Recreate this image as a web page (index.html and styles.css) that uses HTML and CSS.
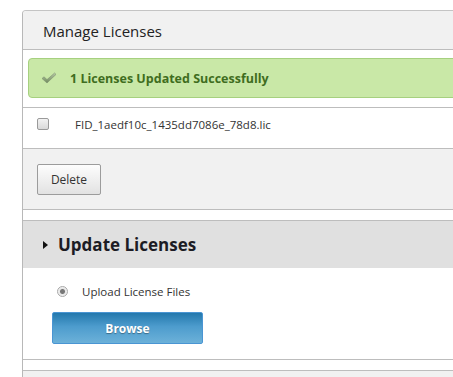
FILE: index.html
```html
<!DOCTYPE html>
<html lang="en">
<head>
    <meta charset="UTF-8">
    <meta name="viewport" content="width=device-width, initial-scale=1.0">
    <title>Manage Licenses</title>
    <link rel="stylesheet" href="styles.css">
</head>
<body>

<div class="panel">
    <div class="panel-title">Manage Licenses</div>

    <div class="message-area">
        <div class="alert-success">
            <svg class="check-icon" width="16" height="12" viewBox="0 0 16 12">
                <defs>
                    <linearGradient id="chk" x1="0" y1="0" x2="0" y2="1">
                        <stop offset="0" stop-color="#b9c9a8"/>
                        <stop offset="1" stop-color="#6f8a5c"/>
                    </linearGradient>
                </defs>
                <path d="M1 6.5 L3 4.8 L6 7.6 L13.6 1 L15 2.4 L6 11 Z" fill="url(#chk)" stroke="#7d9270" stroke-width="0.6"/>
            </svg>
            <span>1 Licenses Updated Successfully</span>
        </div>
    </div>

    <div class="license-row">
        <span class="fake-checkbox"></span>
        <span class="license-name">FID_1aedf10c_1435dd7086e_78d8.lic</span>
    </div>

    <div class="panel-footer">
        <button class="btn-default">Delete</button>
    </div>

    <div class="spacer"></div>

    <div class="section-head">
        <span class="caret"></span>
        <h2>Update Licenses</h2>
    </div>

    <div class="section-body">
        <div class="radio-row">
            <span class="fake-radio"></span>
            <span>Upload License Files</span>
        </div>
        <button class="btn-primary">Browse</button>
    </div>

    <div class="spacer"></div>
    <div class="next-section"></div>
</div>

</body>
</html>
```

FILE: styles.css
```css
body {
    margin: 0;
    padding: 10px 0 0 22px;
    overflow: hidden;
    font-family: "Open Sans", Arial, sans-serif;
    color: #333;
    background-color: white;
}
.panel {
    width: 520px;
    border-left: 1px solid #b8b8b8;
    border-top: 1px solid #c4c4c4;
    border-top-left-radius: 4px;
}
.panel-title {
    background-color: #f1f1f1;
    height: 38px;
    line-height: 40px;
    padding-left: 20px;
    font-size: 15px;
    color: #222;
    border-bottom: 1px solid #bdbdbd;
    border-top-left-radius: 4px;
}
.message-area {
    padding: 8px 0 9px 5px;
    border-bottom: 1px solid #bdbdbd;
}
.alert-success {
    display: flex;
    align-items: center;
    height: 38px;
    background-color: #c9e8a7;
    border: 1px solid #a6d07f;
    border-radius: 4px;
    padding-left: 12px;
    color: #3f6d20;
    font-size: 12.5px;
    font-weight: bold;
}
.check-icon {
    margin-right: 13px;
}
.license-row {
    display: flex;
    align-items: center;
    height: 20px;
    padding: 6px 0 14px 14px;
    font-size: 11.5px;
    color: #333;
    border-bottom: 1px solid #bdbdbd;
}
.fake-checkbox {
    width: 10px;
    height: 10px;
    border: 1px solid #9a9a9a;
    border-radius: 2px;
    background: linear-gradient(#f2f2f2, #d9d9d9);
    margin-right: 26px;
}
.panel-footer {
    background-color: #f1f1f1;
    height: 60px;
    padding-left: 14px;
    display: flex;
    align-items: center;
    border-bottom: 1px solid #bdbdbd;
}
.btn-default {
    width: 64px;
    height: 31px;
    margin-top: 1px;
    border: 1px solid #9c9c9c;
    border-radius: 2px;
    background: linear-gradient(#fdfdfd, #e2e2e2);
    font-family: "Open Sans", Arial, sans-serif;
    font-size: 12px;
    color: #333;
}
.spacer {
    height: 10px;
    border-bottom: 1px solid #bdbdbd;
}
.section-head {
    display: flex;
    align-items: center;
    height: 47px;
    background-color: #e0e0e0;
    padding-left: 20px;
}
.caret {
    width: 0;
    height: 0;
    border-top: 4px solid transparent;
    border-bottom: 4px solid transparent;
    border-left: 5px solid #111;
    margin-right: 10px;
}
.section-head h2 {
    margin: 0;
    font-size: 17px;
    font-weight: bold;
    color: #1c1c24;
}
.section-body {
    padding: 15px 0 15px 29px;
    border-bottom: 1px solid #bdbdbd;
}
.radio-row {
    display: flex;
    align-items: center;
    height: 16px;
    padding-left: 5px;
    font-size: 11.5px;
    color: #333;
    margin-bottom: 13px;
}
.fake-radio {
    width: 9px;
    height: 9px;
    border: 1px solid #a8a8a8;
    border-radius: 50%;
    background: radial-gradient(circle, #777 0, #777 2px, #e6e6e6 3px, #f6f6f6 5px);
    margin-right: 14px;
}
.btn-primary {
    width: 151px;
    height: 32px;
    border: 1px solid #4a95d3;
    border-radius: 2px;
    background: linear-gradient(#2378ad, #4d9ccd 45%, #6cb1d9);
    color: white;
    font-family: "Open Sans", Arial, sans-serif;
    font-size: 12px;
    font-weight: bold;
    text-shadow: 0 1px 1px rgba(0, 0, 0, 0.35);
}
.next-section {
    height: 20px;
    background-color: #f1f1f1;
}
```
